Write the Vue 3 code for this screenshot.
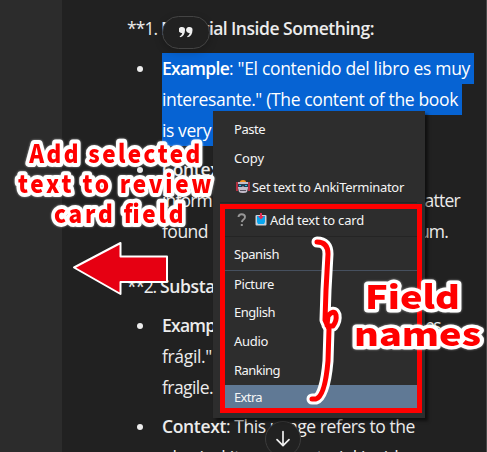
<script setup>
const lines = {
  partial: [
    [{ t: 'Example', w: 67, b: true }, { t: ': "El contenido del libro es muy', w: 241 }],
    [{ t: 'interesante." (The content of the book', w: 296 }],
    [{ t: 'is very', w: 49 }]
  ],
  context: [
    [{ t: 'Context', w: 64, b: true }, { t: ':', w: 4 }],
    [{ t: 'inform', w: 50 }, { t: 'matter', w: 51, gap: 197 }],
    [{ t: 'found', w: 46 }, { t: 'curriculum.', w: 84, gap: 156 }]
  ],
  substance: [
    [{ t: 'Example', w: 67, b: true }, { t: 'es', w: 15, gap: 196 }],
    [{ t: 'frágil."', w: 50 }],
    [{ t: 'fragile.', w: 51 }]
  ],
  usage: [
    [{ t: 'Context', w: 64, b: true }, { t: ': This usage refers to the', w: 189 }],
    [{ t: 'physical item or material inside', w: 246 }]
  ]
}
const items = [
  { t: 'Paste', w: 31, h: 29 },
  { t: 'Copy', w: 30, h: 29 },
  { t: 'Set text to AnkiTerminator', w: 152, h: 31, icon: 'robot', sep: true },
  { t: 'Add text to card', w: 94, h: 34, icon: 'card', sep: true },
  { t: 'Spanish', w: 45, h: 34, sep: true, strong: true },
  { t: 'Picture', w: 40, h: 26 },
  { t: 'English', w: 41, h: 29 },
  { t: 'Audio', w: 34, h: 29 },
  { t: 'Ranking', w: 46, h: 30 },
  { t: 'Extra', w: 28, h: 24, active: true }
]
// Spreads the letters so that a run takes exactly the given width.
const vFit = {
  mounted(el, { value }) {
    el.style.display = 'inline-block'
    const natural = el.getBoundingClientRect().width
    el.style.letterSpacing = (value - natural) / el.textContent.length + 'px'
  }
}
</script>

<template>
  <main class="screen">
    <aside class="side"></aside>
    <section class="chat">
      <h3 class="heading"><span v-fit="34" class="num">**1. </span><span v-fit="70">Material </span><span v-fit="143">Inside Something:</span></h3>
      <ul v-for="(group, name) in lines" :key="name" :class="['item', name]">
        <li v-if="name === 'substance'" class="heading second"><span v-fit="29" class="num">**2.</span><span v-fit="84" class="word">Substance</span></li>
        <li v-for="(line, i) in group" :key="i" class="line">
          <i v-if="i === 0" class="dot"></i>
          <span class="run"><span v-for="p in line" :key="p.t" v-fit="p.w" :class="{ bold: p.b }" :style="{ marginLeft: (p.gap || 0) + 'px' }">{{ p.t }}</span></span>
        </li>
      </ul>
    </section>

    <div class="quote">
      <svg width="14" height="11" viewBox="0 0 14 11" fill="#f0f0f0"><path d="M3 0a3 3 0 0 1 3 3.2C6 7 4 9.6 1.2 10.3L.6 9.2C2 8.5 3 7.300 3.200 5.900A3 3 0 1 1 3 0zM10.500 0a3 3 0 0 1 3 3.200c0 3.800-2 6.400-4.800 7.100l-.6-1.100c1.400-.7 2.400-1.900 2.600-3.300A3 3 0 1 1 10.500 0z"/></svg>
    </div>
    <div class="down">
      <svg width="16" height="18" viewBox="0 0 16 18" fill="none" stroke="#eee" stroke-width="1.700" stroke-linecap="round" stroke-linejoin="round"><path d="M8 1.500v14M2 9.700l6 6 6-6"/></svg>
    </div>

    <nav class="menu">
      <div v-for="m in items" :key="m.t" :class="['entry', { sep: m.sep, strong: m.strong, active: m.active, iconed: m.icon === 'robot' }]" :style="{ height: m.h + 'px' }">
        <svg v-if="m.icon === 'robot'" class="robot" width="16" height="16" viewBox="0 0 16 16">
          <path d="M2 3v3M14 3v3" stroke="#d83345" stroke-width="1.500"/><path d="M1 6h2v6H1zM13 6h2v6h-2z" fill="#b72d40"/>
          <path d="M5 3q0-2 3-2t3 2z" fill="#f69220"/>
          <path d="M3 3h10v6l-1 4q-1 1-4 1t-4-1L3 9z" fill="#c4bdcb"/><path d="M3 5h10v3H9L8 7 7 8H3z" fill="#263c50"/><path d="M4 6h2v1H4zM10 6h2v1h-2z" fill="#20bce8"/><path d="M5 11h6v1H5z" fill="#57515e"/>
        </svg>
        <template v-if="m.icon === 'card'">
          <svg class="ask" width="10" height="14" viewBox="0 0 10 14"><path d="M1.500 4Q1.500 1.300 4.700 1.300T8 4Q8 5.500 6.500 6.500T4.800 9.200" fill="none" stroke="#969696" stroke-width="1.900"/><rect x="3.800" y="11" width="2" height="2" fill="#969696"/></svg>
          <svg class="tray" width="12" height="13" viewBox="0 0 12 13"><rect x=".5" y="2" width="11" height="10.500" rx="1" fill="#c9d1da"/><path d="M2 3h8v6l-1 2H3L2 9z" fill="#08a5ee"/><path d="M5 0h2v3h2L6 6.500 3 3h2z" fill="#e52b50"/></svg>
        </template>
        <span v-fit="m.w">{{ m.t }}</span>
      </div>
    </nav>

    <div class="frame"></div>
    <svg class="notes" width="487" height="452" viewBox="0 0 487 452">
      <path d="M74 267.500 120.500 243v13.500h46.500v25.500h-46.500V294z" fill="#e60012" stroke="#fff" stroke-width="2" stroke-linejoin="round"/>
      <path class="halo" d="M317 242q11 0 11 12l-2 36-1 30 4 9-1 32q-3 35-12 38h-4M327 325l1-9q6-7 8-1 1 6-3 11h-5"/>
      <path class="pen" d="M317 242q11 0 11 12l-2 36-1 30 4 9-1 32q-3 35-12 38h-4M327 325l1-9q6-7 8-1 1 6-3 11h-5"/>
      <g class="caption narrow">
        <text x="32.500" y="163.500" textLength="190">Add selected</text>
        <text x="20" y="193.500" textLength="215">text to review</text>
        <text x="60" y="223" textLength="144">card field</text>
      </g>
      <g class="caption wide">
        <text x="365" y="308.500" textLength="95" lengthAdjust="spacingAndGlyphs">Field</text>
        <text x="354" y="345.500" textLength="127" lengthAdjust="spacingAndGlyphs">names</text>
      </g>
    </svg>
  </main>
</template>

<style>
body { margin: 0; background: #212121; overflow: hidden; }
</style>
<style scoped>
.screen { position: relative; display: flex; width: 487px; height: 452px; overflow: hidden; background: #212121; color: #ececec; font: 17.500px/31px "Open Sans", "Noto Sans", sans-serif; }
.side { flex: 0 0 62px; background: #2c2c2c; }
.chat { flex: 1; padding-top: 13px; border-right: 1px solid #494949; box-sizing: border-box; white-space: pre; }
.heading { margin: 0 0 9px; padding-left: 65px; height: 31px; font-size: 17.500px; font-weight: 600; }
.num { font-weight: 400; }
.word { margin-left: 4px; }
.item { list-style: none; margin: 0 0 8px; padding: 0; }
.context { margin-bottom: 24px; }
.substance { margin-bottom: 8px; }
.heading.second { margin-bottom: 8px; }
.line { display: flex; align-items: center; height: 31px; padding-left: 100px; }
.run { height: 31px; }
.partial .run { background: #0663d3; color: #fff; padding-right: 4px; }
.bold { font-weight: 600; }
.dot { width: 6px; height: 6px; border-radius: 50%; background: #ececec; margin-left: -25px; margin-right: 19px; }
.quote { position: absolute; left: 162px; top: 16px; width: 48px; height: 33px; box-sizing: border-box; border: 1px solid #444; border-radius: 17px; background: #212121; display: flex; align-items: center; justify-content: center; box-shadow: 0 3px 8px #0003; }
.down { position: absolute; left: 265px; top: 421px; width: 36px; height: 36px; box-sizing: border-box; border: 1px solid #3c3c3c; border-radius: 50%; background: #212121; display: flex; align-items: center; justify-content: center; }
.menu { position: absolute; left: 213px; top: 111px; width: 212px; height: 307px; box-sizing: border-box; padding: 3px 8px 0 7px; background: #2d2d2d; box-shadow: 3px 3px 3px #0008; color: #f5f5f5; font-family: "Noto Sans", sans-serif; font-size: 13px; line-height: 20px; white-space: pre; }
.entry { display: flex; align-items: center; box-sizing: border-box; padding-left: 14px; }
.sep { border-bottom: 1px solid #242424; }
.strong { border-color: #46505f; }
.active { background: #607995; }
.iconed { padding-left: 15px; }
.robot { margin-right: 1px; }
.ask { margin: 0 8px 0 3px; }
.tray { margin-right: 3px; }
.frame { position: absolute; left: 220px; top: 204px; width: 202px; height: 209px; box-sizing: border-box; border: 5px solid #f00; }
.notes { position: absolute; left: 0; top: 0; }
.halo, .pen { fill: none; stroke: #fff; stroke-width: 11px; stroke-linecap: round; stroke-linejoin: round; }
.pen { stroke: #f00; stroke-width: 5px; }
.caption { font-family: "Noto Sans CJK JP", sans-serif; font-size: 25px; font-weight: 900; fill: #f00; stroke: #fff; stroke-width: 8px; stroke-linejoin: round; paint-order: stroke; filter: drop-shadow(0 0 1px #fff8); }
.narrow { transform: scaleX(.9); }
.wide { font-size: 32px; stroke-width: 7px; }
</style>
